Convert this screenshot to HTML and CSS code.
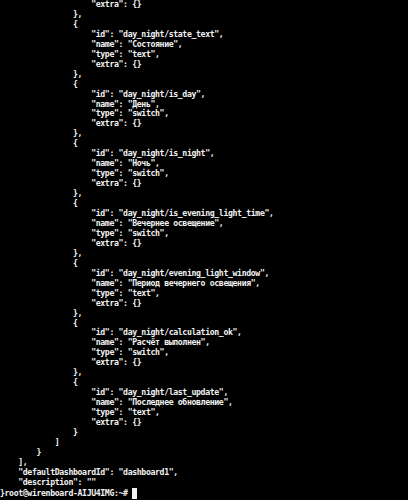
FILE: index.html
```html
<!DOCTYPE html>
<html lang="ru">
<head>
<meta charset="utf-8">
<title>terminal</title>
<link rel="stylesheet" href="styles.css">
</head>
<body>
<div class="term"><pre class="out">                    "extra": {}
                },
                {
                    "id": "day_night/state_text",
                    "name": "Состояние",
                    "type": "text",
                    "extra": {}
                },
                {
                    "id": "day_night/is_day",
                    "name": "День",
                    "type": "switch",
                    "extra": {}
                },
                {
                    "id": "day_night/is_night",
                    "name": "Ночь",
                    "type": "switch",
                    "extra": {}
                },
                {
                    "id": "day_night/is_evening_light_time",
                    "name": "Вечернее освещение",
                    "type": "switch",
                    "extra": {}
                },
                {
                    "id": "day_night/evening_light_window",
                    "name": "Период вечернего освещения",
                    "type": "text",
                    "extra": {}
                },
                {
                    "id": "day_night/calculation_ok",
                    "name": "Расчёт выполнен",
                    "type": "switch",
                    "extra": {}
                },
                {
                    "id": "day_night/last_update",
                    "name": "Последнее обновление",
                    "type": "text",
                    "extra": {}
                }
            ]
        }
    ],
    "defaultDashboardId": "dashboard1",
    "description": ""
}root@wirenboard-AIJU4IMG:~# <span class="cursor"></span></pre></div>
</body>
</html>
```
FILE: styles.css
```css
html, body {
  margin: 0;
  padding: 0;
  background: #000;
  height: 100%;
  overflow: hidden;
}
.term {
  background: #000;
  padding: 0;
}
.out {
  margin: 0;
  font-family: "DejaVu Sans Mono", "Liberation Mono", monospace;
  font-size: 8.2px;
  letter-spacing: -0.37px;
  line-height: 9.96px;
  color: #f2f2f2;
  white-space: pre;
  font-weight: bold;
}
.cursor {
  display: inline-block;
  width: 5px;
  height: 11px;
  background: #f2f2f2;
  vertical-align: -3px;
}
```
